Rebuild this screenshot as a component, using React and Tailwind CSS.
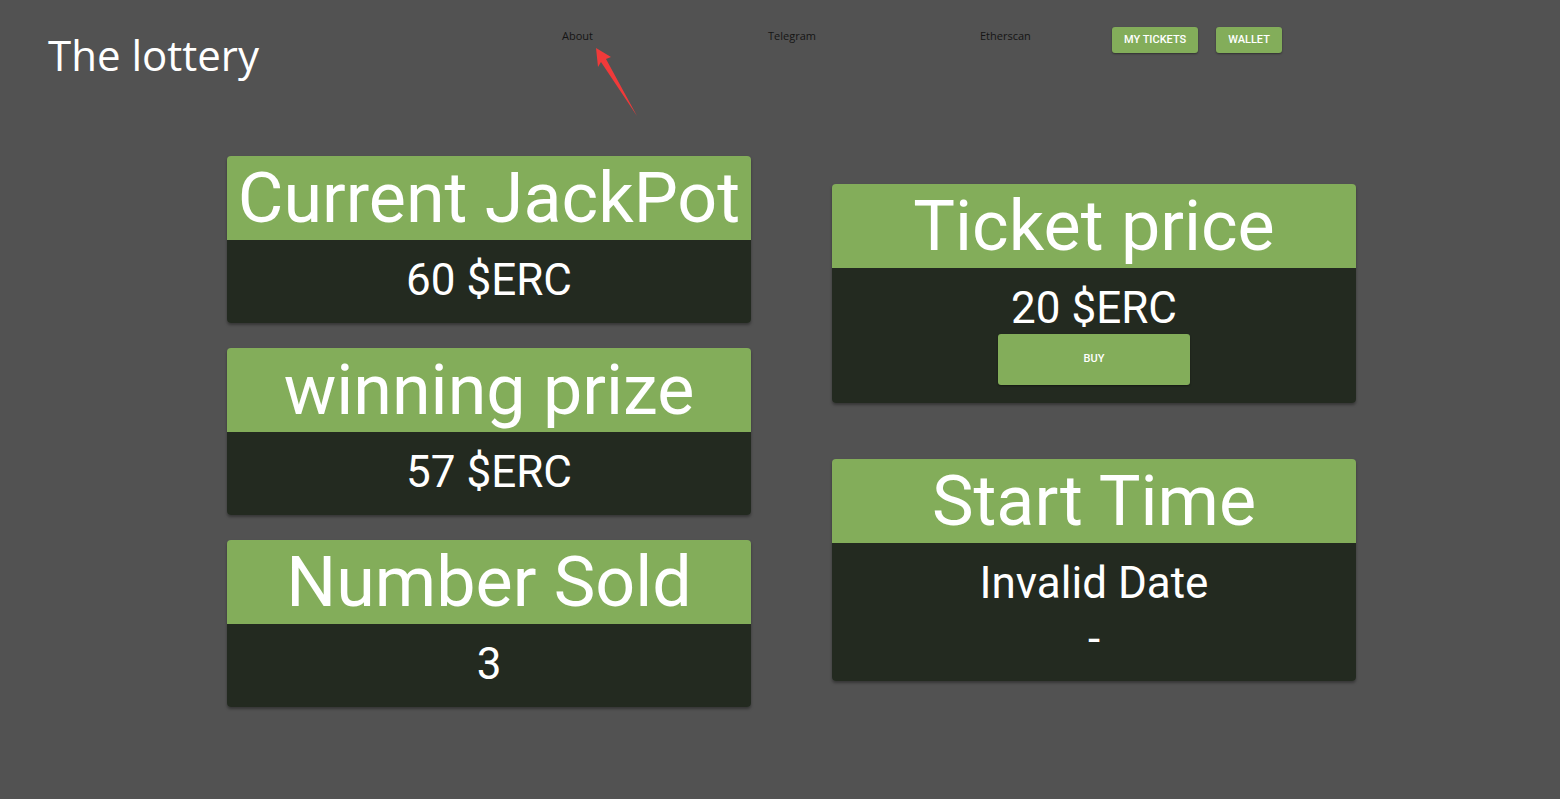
import React from 'react';

const Card = ({ title, children }) => (
    <div className="w-[524px] rounded-[4px] overflow-hidden shadow-[0_2px_3px_rgba(0,0,0,0.35)]">
        <div className="h-[84px] bg-[#83ad5a] flex items-center justify-center text-white text-[70px] leading-none font-normal">
            {title}
        </div>
        <div className="bg-[#232a20] text-white">
            {children}
        </div>
    </div>
)

const App = () => {
    return (
        <div className="relative min-h-[799px] bg-[#525252] font-['Roboto',sans-serif]">
            <header className="flex items-start h-[156px]">
                <div className="w-[562px] pl-[48px] pt-[27px]">
                    <h1 className="font-['Open_Sans',sans-serif] text-[42px] leading-[56px] text-white">The lottery</h1>
                </div>
                <nav className="flex items-start pt-[28px] text-[11px] text-[#151515] font-['Open_Sans',sans-serif]">
                    <a className="w-[206px]">About</a>
                    <a className="w-[212px]">Telegram</a>
                    <a className="w-[132px]">Etherscan</a>
                </nav>
                <div className="flex gap-[18px] pt-[27px]">
                    <button className="h-[26px] px-[12px] rounded-[3px] bg-[#83ad5a] text-white text-[11px] font-medium uppercase shadow-[0_1px_2px_rgba(0,0,0,0.4)]">My Tickets</button>
                    <button className="h-[26px] px-[12px] rounded-[3px] bg-[#83ad5a] text-white text-[11px] font-medium uppercase shadow-[0_1px_2px_rgba(0,0,0,0.4)]">Wallet</button>
                </div>
            </header>

            <main className="flex pl-[227px] gap-[81px]">
                <div className="flex flex-col gap-[25px]">
                    <Card title="Current JackPot">
                        <div className="h-[83px] flex items-center justify-center pb-[3px] text-[44px]">60 $ERC</div>
                    </Card>
                    <Card title="winning prize">
                        <div className="h-[83px] flex items-center justify-center pb-[3px] text-[44px]">57 $ERC</div>
                    </Card>
                    <Card title="Number Sold">
                        <div className="h-[83px] flex items-center justify-center pb-[3px] text-[44px]">3</div>
                    </Card>
                </div>
                <div className="flex flex-col gap-[56px] pt-[28px]">
                    <Card title="Ticket price">
                        <div className="h-[135px] flex flex-col items-center pt-[14px]">
                            <div className="text-[44px] leading-[52px]">20 $ERC</div>
                            <button className="w-[192px] h-[51px] rounded-[3px] bg-[#83ad5a] text-white text-[11px] font-medium uppercase shadow-[0_1px_2px_rgba(0,0,0,0.4)]">Buy</button>
                        </div>
                    </Card>
                    <Card title="Start Time">
                        <div className="h-[138px] flex flex-col items-center pt-[12px]">
                            <div className="text-[44px] leading-[56px]">Invalid Date</div>
                            <div className="text-[44px] leading-[56px]">-</div>
                        </div>
                    </Card>
                </div>
            </main>

            <svg className="absolute left-[590px] top-[40px]" width="56" height="82" viewBox="0 0 56 82">
                <polygon points="6,8 21,17 16,19 47,76 11,22 8,27" fill="#f03a3a" />
            </svg>
        </div>
    )
}

export default App
